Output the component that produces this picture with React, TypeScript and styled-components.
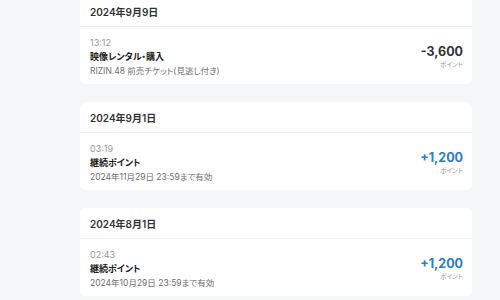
import styled, { createGlobalStyle } from 'styled-components';

const GlobalStyle = createGlobalStyle`
  html, body {
    margin: 0;
    padding: 0;
    background: #f5f6f8;
    font-family: Inter, 'Noto Sans CJK JP', sans-serif;
  }
`;

const Page = styled.div`
  width: 500px;
  height: 300px;
  overflow: hidden;
  background: #f5f6f8;
`;

const List = styled.div`
  display: flex;
  flex-direction: column;
  gap: 18px;
  margin: -4px 28px 0 80px;
`;

const Card = styled.section`
  background: #ffffff;
  border-radius: 6px;
`;

const DateHeader = styled.div`
  height: 30px;
  display: flex;
  align-items: center;
  padding: 0 10px;
  font-size: 10px;
  font-weight: 600;
  color: #333;
  border-bottom: 1px solid #f0f1f3;
`;

const Row = styled.div`
  display: flex;
  justify-content: space-between;
  align-items: center;
  padding: 9px 9px 6px 10px;
`;

const Info = styled.div`
  display: flex;
  flex-direction: column;
  font-feature-settings: 'palt';
`;

const Time = styled.div`
  font-size: 9px;
  line-height: 14px;
  color: #9a9a9a;
`;

const Title = styled.div`
  font-size: 9px;
  line-height: 14px;
  font-weight: 700;
  color: #222;
`;

const Note = styled.div`
  font-size: 8.5px;
  line-height: 14px;
  color: #6f6f6f;
`;

const Amount = styled.div`
  display: flex;
  flex-direction: column;
  align-items: flex-end;
  margin-bottom: 2px;
`;

const Value = styled.div<{ $plus: boolean }>`
  font-size: 12.5px;
  line-height: 17px;
  font-weight: 700;
  color: ${(p) => (p.$plus ? '#2a7ccf' : '#333')};
`;

const Unit = styled.div`
  font-size: 6.5px;
  line-height: 10px;
  color: #999;
  font-feature-settings: 'palt';
`;

type Entry = {
  date: string;
  time: string;
  title: string;
  note: string;
  value: string;
  plus: boolean;
};

const entries: Entry[] = [
  {
    date: '2024年9月9日',
    time: '13:12',
    title: '映像レンタル・購入',
    note: 'RIZIN.48 前売チケット(見逃し付き)',
    value: '-3,600',
    plus: false,
  },
  {
    date: '2024年9月1日',
    time: '03:19',
    title: '継続ポイント',
    note: '2024年11月29日 23:59まで有効',
    value: '+1,200',
    plus: true,
  },
  {
    date: '2024年8月1日',
    time: '02:43',
    title: '継続ポイント',
    note: '2024年10月29日 23:59まで有効',
    value: '+1,200',
    plus: true,
  },
];

export default function App() {
  return (
    <Page>
      <GlobalStyle />
      <List>
        {entries.map((e) => (
          <Card key={e.date}>
            <DateHeader>{e.date}</DateHeader>
            <Row>
              <Info>
                <Time>{e.time}</Time>
                <Title>{e.title}</Title>
                <Note>{e.note}</Note>
              </Info>
              <Amount>
                <Value $plus={e.plus}>{e.value}</Value>
                <Unit>ポイント</Unit>
              </Amount>
            </Row>
          </Card>
        ))}
      </List>
    </Page>
  );
}
